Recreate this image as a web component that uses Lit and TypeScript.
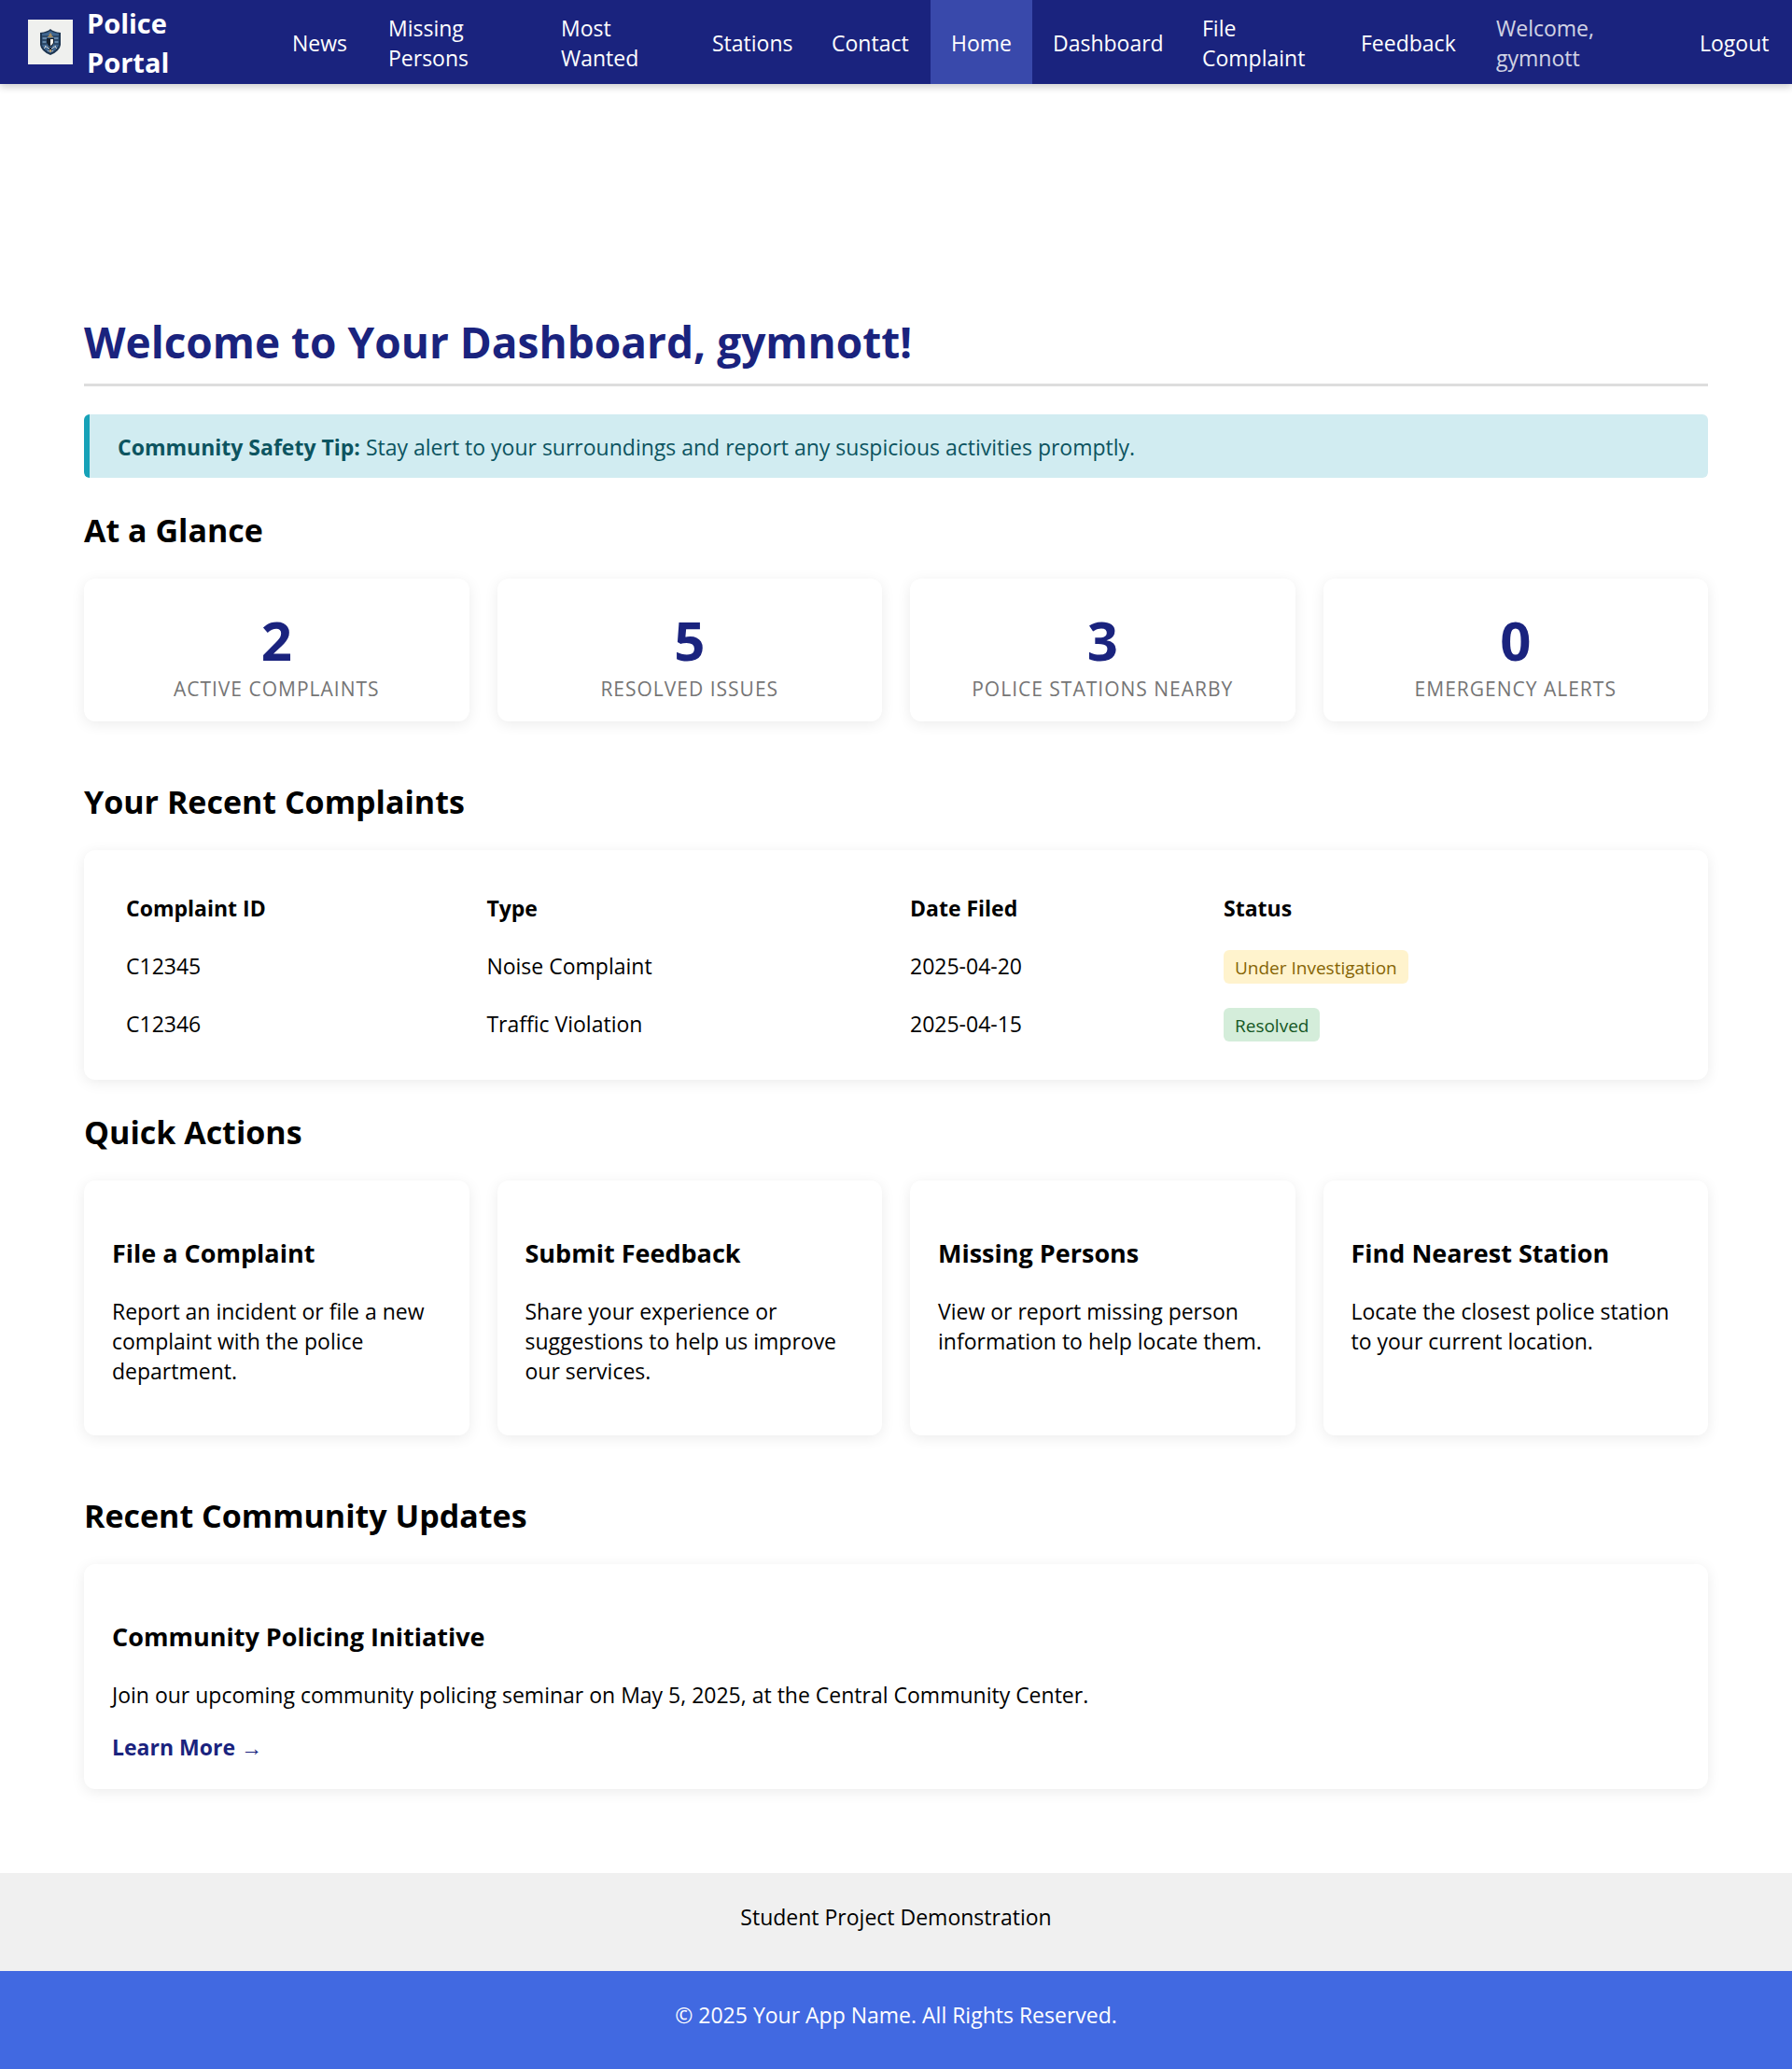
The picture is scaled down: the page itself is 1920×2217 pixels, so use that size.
import { LitElement, html, css, svg } from "lit";
import { customElement } from "lit/decorators.js";
import { classMap } from "lit/directives/class-map.js";

const NAV = [
  "News", "Missing Persons", "Most Wanted", "Stations", "Contact", "Home",
  "Dashboard", "File Complaint", "Feedback", "Welcome, gymnott", "Logout",
];

const STATS: [string, string][] = [
  ["2", "Active Complaints"],
  ["5", "Resolved Issues"],
  ["3", "Police Stations Nearby"],
  ["0", "Emergency Alerts"],
];

const COMPLAINTS = [
  { id: "C12345", type: "Noise Complaint", date: "2025-04-20", status: "Under Investigation", done: false },
  { id: "C12346", type: "Traffic Violation", date: "2025-04-15", status: "Resolved", done: true },
];

const ACTIONS: [string, string][] = [
  ["File a Complaint", "Report an incident or file a new complaint with the police department."],
  ["Submit Feedback", "Share your experience or suggestions to help us improve our services."],
  ["Missing Persons", "View or report missing person information to help locate them."],
  ["Find Nearest Station", "Locate the closest police station to your current location."],
];

const shield = svg`
  <rect width="48" height="48" fill="#eff0ee"/>
  <path d="M24 10 Q27 13 35 14 V27 Q34 34 24 38 Q14 34 13 27 V14 Q21 13 24 10Z" fill="#1d3550"/>
  <path d="M24 12 Q28 15 33 15 V27 Q32 32 24 36 Q16 32 15 27 V15 Q20 15 24 12Z" fill="#3f6690"/>
  <path d="M15 18 H33 M15 22 H20 M28 22 H33 M15 26 H20 M28 26 H33" stroke="#1d3047" stroke-width="1"/>
  <path d="M16 20 H20 M28 20 H32 M16 24 H19 M29 24 H32" stroke="#8ea9c0" stroke-width="1"/>
  <path d="M20 20 H28 V25 Q27 28 24 29 Q21 28 20 25Z" fill="#17222f"/>
  <path d="M24 21 H27 V25 Q26 27 24 28Z" fill="#f3f2ec"/>
  <path d="M24 14 L26 17 L24 20 L22 17Z M21 18 H27 V19 H21Z" fill="#a58d62"/>
  <path d="M18 28 L27 34 M30 28 L21 34 M17 31 L19 29 M31 31 L29 29" stroke="#c8cdd0" stroke-width="1"/>
  <path d="M22 29 L26 33 M26 29 L22 33" stroke="#17222f" stroke-width="1"/>
  <path d="M23 32 H25 V35 H23Z" fill="#b79a68"/>`;

@customElement("app-root")
export class AppRoot extends LitElement {
  static styles = css`
    :host {
      display: block;
      min-height: 100vh;
      background: #fff;
      color: #000;
      font: 23px/32px "Open Sans", "Noto Sans", sans-serif;
    }
    .bar {
      display: grid;
      grid-template-columns: 291fr 1629fr;
      min-height: 90px;
      background: #1a237e;
      box-shadow: 0 3px 8px rgba(0, 0, 0, 0.2);
    }
    .brand {
      display: flex;
      align-items: center;
      gap: 15px;
      padding: 0 30px;
      color: #fff;
      font-size: 29px;
      font-weight: 700;
      line-height: 42px;
      text-decoration: none;
    }
    .name { padding-top: 2px; }
    .logo { flex: none; width: 48px; height: 48px; }
    .links {
      display: grid;
      grid-template-columns: 103fr 185fr 162fr 128fr 128fr 109fr 160fr 170fr 145fr 218fr 121fr;
      height: 100%;
      margin: 0;
      padding: 0;
      list-style: none;
    }
    .links li { display: flex; }
    .link {
      display: flex;
      flex: 1;
      align-items: center;
      padding: 2px 15px 0 22px;
      color: #fff;
      text-decoration: none;
    }
    .active { background: #3949ab; }
    .greeting { padding-right: 60px; opacity: 0.8; }
    .page { padding: 244px 90px 90px; }
    h1 {
      margin: 0 0 30px;
      padding-bottom: 13px;
      border-bottom: 3px solid #ddd;
      color: #1a237e;
      font-size: 46px;
      line-height: 64px;
    }
    h2 { margin: 32px 0 28px; font-size: 34px; line-height: 48px; }
    h3 { margin: 28px 0; font-size: 27px; line-height: 37px; }
    p { margin: 24px 0; }
    .tip {
      padding: 19px 30px 17px;
      border-left: 6px solid #17a2b8;
      border-radius: 6px;
      background: #d1ecf1;
      color: #0c5460;
    }
    .cards {
      display: grid;
      grid-template-columns: repeat(4, 1fr);
      gap: 30px;
      margin-bottom: 62px;
    }
    .card {
      border-radius: 12px;
      background: #fff;
      box-shadow: 0 3px 15px rgba(0, 0, 0, 0.08);
    }
    .text { display: flow-root; padding: 31px 30px 29px; }
    .stat { padding: 27px 30px 20px; text-align: center; }
    .number { color: #1a237e; font-size: 58px; font-weight: 700; line-height: 77px; }
    .label {
      color: #757575;
      font-size: 21px;
      line-height: 29px;
      letter-spacing: 1px;
      text-transform: uppercase;
    }
    .sheet { padding: 31px 30px 29px; }
    table { width: 100%; border-collapse: collapse; }
    th, td { padding: 15px; text-align: left; }
    .c-id { width: 23%; }
    .c-type { width: 27%; }
    .c-date { width: 20%; }
    .badge {
      padding: 6px 12px 4px;
      border-radius: 6px;
      background: #fff3cd;
      color: #856404;
      font-size: 19px;
      line-height: 26px;
    }
    .done { background: #d4edda; color: #155724; }
    .more { color: #1a237e; font-weight: 700; text-decoration: none; }
    .note, .copy { padding: 31px 30px 42px; text-align: center; }
    .note { background: #f0f0f0; }
    .copy { background: #4169e1; color: #fff; }
  `;

  render() {
    return html`
      <header class="bar">
        <a class="brand" href="#">
          <svg class="logo" viewBox="0 0 48 48" aria-hidden="true">${shield}</svg>
          <span class="name">Police Portal</span>
        </a>
        <nav aria-label="Main">
          <ul class="links">
            ${NAV.map((n) => html`<li>${n.startsWith("Welcome")
              ? html`<span class="link greeting">${n}</span>`
              : html`<a href="#" class=${classMap({ link: true, active: n === "Home" })}>${n}</a>`}</li>`)}
          </ul>
        </nav>
      </header>
      <main class="page">
        <h1>Welcome to Your Dashboard, gymnott!</h1>
        <div class="tip"><strong>Community Safety Tip:</strong> Stay alert to your surroundings and report any suspicious activities promptly.</div>
        <h2>At a Glance</h2>
        <div class="cards">
          ${STATS.map(([n, l]) => html`<div class="card stat"><div class="number">${n}</div><div class="label">${l}</div></div>`)}
        </div>
        <h2>Your Recent Complaints</h2>
        <div class="card sheet">
          <table>
            <thead>
              <tr><th class="c-id">Complaint ID</th><th class="c-type">Type</th><th class="c-date">Date Filed</th><th>Status</th></tr>
            </thead>
            <tbody>
              ${COMPLAINTS.map((c) => html`<tr>
                <td>${c.id}</td><td>${c.type}</td><td>${c.date}</td>
                <td><span class=${classMap({ badge: true, done: c.done })}>${c.status}</span></td>
              </tr>`)}
            </tbody>
          </table>
        </div>
        <h2>Quick Actions</h2>
        <div class="cards">
          ${ACTIONS.map(([t, d]) => html`<article class="card text"><h3>${t}</h3><p>${d}</p></article>`)}
        </div>
        <h2>Recent Community Updates</h2>
        <article class="card text">
          <h3>Community Policing Initiative</h3>
          <p>Join our upcoming community policing seminar on May 5, 2025, at the Central Community Center.</p>
          <a class="more" href="#">Learn More →</a>
        </article>
      </main>
      <footer>
        <div class="note">Student Project Demonstration</div>
        <div class="copy">© 2025 Your App Name. All Rights Reserved.</div>
      </footer>
    `;
  }
}
